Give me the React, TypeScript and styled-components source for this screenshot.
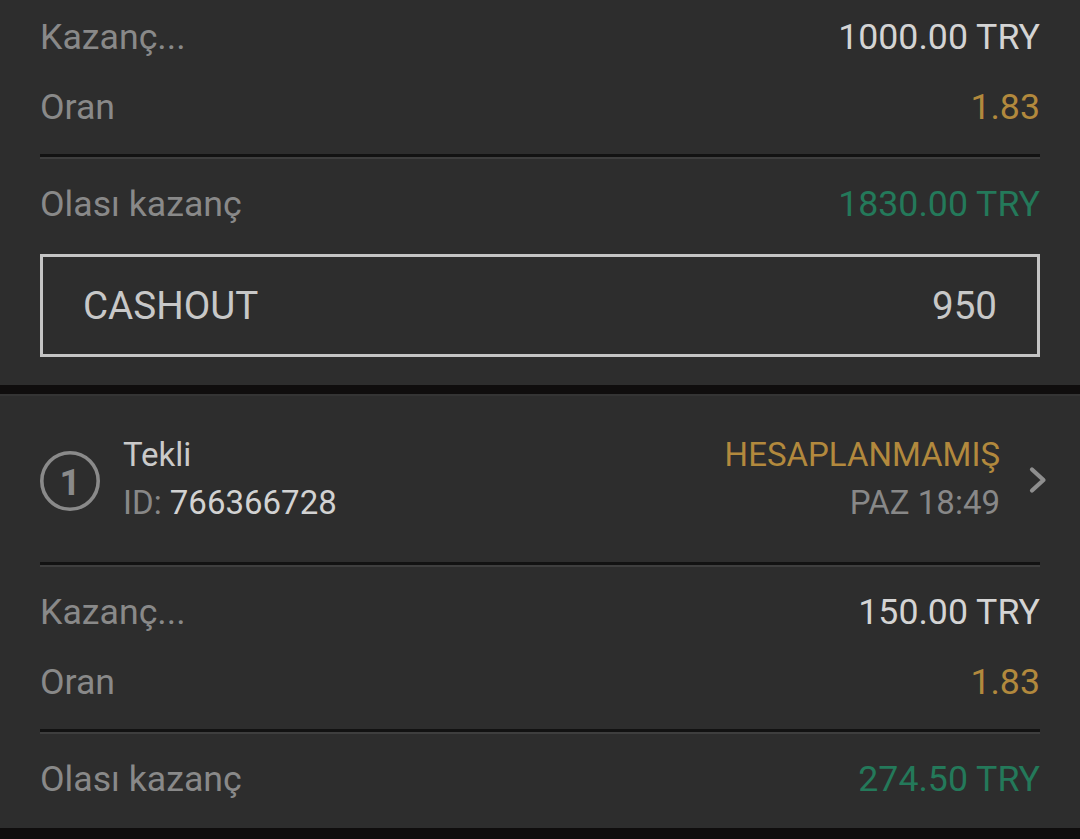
import React from "react";
import styled, { createGlobalStyle } from "styled-components";

const GlobalStyle = createGlobalStyle`
  html, body {
    margin: 0;
    padding: 0;
    background: #0f0d0d;
  }
  body {
    font-family: Roboto, "Noto Sans", "Liberation Sans", sans-serif;
    -webkit-font-smoothing: antialiased;
  }
`;

const Page = styled.div`
  width: 1080px;
  display: flex;
  flex-direction: column;
`;

const Section = styled.section<{ $top: number; $bottom: number }>`
  background: #2d2d2d;
  padding: ${(p) => p.$top}px 40px ${(p) => p.$bottom}px 40px;
  display: flex;
  flex-direction: column;
`;

const Band = styled.div`
  height: 9px;
  background: #0f0d0d;
  border-bottom: 2px solid #343434;
`;

const Row = styled.div<{ $mt?: number }>`
  display: flex;
  justify-content: space-between;
  align-items: center;
  height: 48px;
  margin-top: ${(p) => p.$mt ?? 0}px;
  font-size: 35.7px;
`;

const Label = styled.span`
  color: #898989;
`;

type Tone = "plain" | "gold" | "green";
const toneColor: Record<Tone, string> = {
  plain: "#d4d4d4",
  gold: "#b2893d",
  green: "#24795a",
};

const Value = styled.span<{ $tone: Tone }>`
  color: ${(p) => toneColor[p.$tone]};
`;

const Divider = styled.div<{ $mt: number; $mb: number }>`
  height: 0;
  border-top: 3px solid #121212;
  border-bottom: 2px solid #3e3e3e;
  margin: ${(p) => p.$mt}px 0 ${(p) => p.$mb}px 0;
`;

const CashoutBox = styled.button`
  margin-top: 26px;
  height: 103px;
  box-sizing: border-box;
  border: 3px solid #c4c4c4;
  background: transparent;
  display: flex;
  justify-content: space-between;
  align-items: center;
  padding: 0 40px 0 40px;
  font-family: inherit;
  font-size: 38.6px;
  color: #c8c8c8;
  cursor: pointer;
`;

const Header = styled.div`
  height: 166px;
  display: flex;
  align-items: center;
  margin-right: -10px;
`;

const Badge = styled.div`
  width: 60px;
  height: 60px;
  margin-top: 4px;
  flex: none;
  display: flex;
  align-items: center;
  justify-content: center;
`;

const Info = styled.div`
  flex: 1;
  display: flex;
  flex-direction: column;
  margin-left: 23px;
  font-size: 33px;
`;

const Meta = styled.div`
  display: flex;
  flex-direction: column;
  align-items: flex-end;
  font-size: 33px;
  margin-right: 1px;
`;

const Line = styled.div`
  height: 48px;
  line-height: 48px;
  white-space: nowrap;
`;

const Title = styled(Line)`
  color: #cacaca;
`;

const Muted = styled.span`
  color: #888888;
`;

const Bright = styled.span`
  color: #d2d2d2;
`;

const Status = styled(Line)`
  color: #b2893d;
`;

const Time = styled(Line)`
  color: #888888;
`;

const Chevron = styled.div`
  width: 47px;
  flex: none;
  display: flex;
  justify-content: flex-end;
  padding-right: 2px;
  margin-top: 2px;
`;

const BadgeIcon = () => (
  <svg width="60" height="60" viewBox="0 0 60 60">
    <circle cx="30" cy="30" r="28.2" fill="none" stroke="#8a8a8a" strokeWidth="3.6" />
    <text
      x="30"
      y="43.5"
      textAnchor="middle"
      fontFamily="Roboto, sans-serif"
      fontWeight="700"
      fontSize="37"
      fill="#8a8a8a"
    >
      1
    </text>
  </svg>
);

const ChevronIcon = () => (
  <svg width="20" height="28" viewBox="0 0 20 28">
    <polyline
      points="4,3.5 15.5,14 4,24.5"
      fill="none"
      stroke="#8e8e8e"
      strokeWidth="4.2"
      strokeLinecap="round"
      strokeLinejoin="round"
    />
  </svg>
);

export default function App() {
  return (
    <Page>
      <GlobalStyle />
      <Section $top={13} $bottom={28}>
        <Row>
          <Label>Kazanç...</Label>
          <Value $tone="plain">1000.00 TRY</Value>
        </Row>
        <Row $mt={22}>
          <Label>Oran</Label>
          <Value $tone="gold">1.83</Value>
        </Row>
        <Divider $mt={23} $mb={21} />
        <Row>
          <Label>Olası kazanç</Label>
          <Value $tone="green">1830.00 TRY</Value>
        </Row>
        <CashoutBox>
          <span>CASHOUT</span>
          <span>950</span>
        </CashoutBox>
      </Section>
      <Band />
      <Section $top={0} $bottom={25}>
        <Header>
          <Badge>
            <BadgeIcon />
          </Badge>
          <Info>
            <Title>Tekli</Title>
            <Line>
              <Muted>ID:</Muted> <Bright>766366728</Bright>
            </Line>
          </Info>
          <Meta>
            <Status>HESAPLANMAMIŞ</Status>
            <Time>PAZ 18:49</Time>
          </Meta>
          <Chevron>
            <ChevronIcon />
          </Chevron>
        </Header>
        <Divider $mt={0} $mb={21} />
        <Row>
          <Label>Kazanç...</Label>
          <Value $tone="plain">150.00 TRY</Value>
        </Row>
        <Row $mt={22}>
          <Label>Oran</Label>
          <Value $tone="gold">1.83</Value>
        </Row>
        <Divider $mt={23} $mb={21} />
        <Row>
          <Label>Olası kazanç</Label>
          <Value $tone="green">274.50 TRY</Value>
        </Row>
      </Section>
    </Page>
  );
}
